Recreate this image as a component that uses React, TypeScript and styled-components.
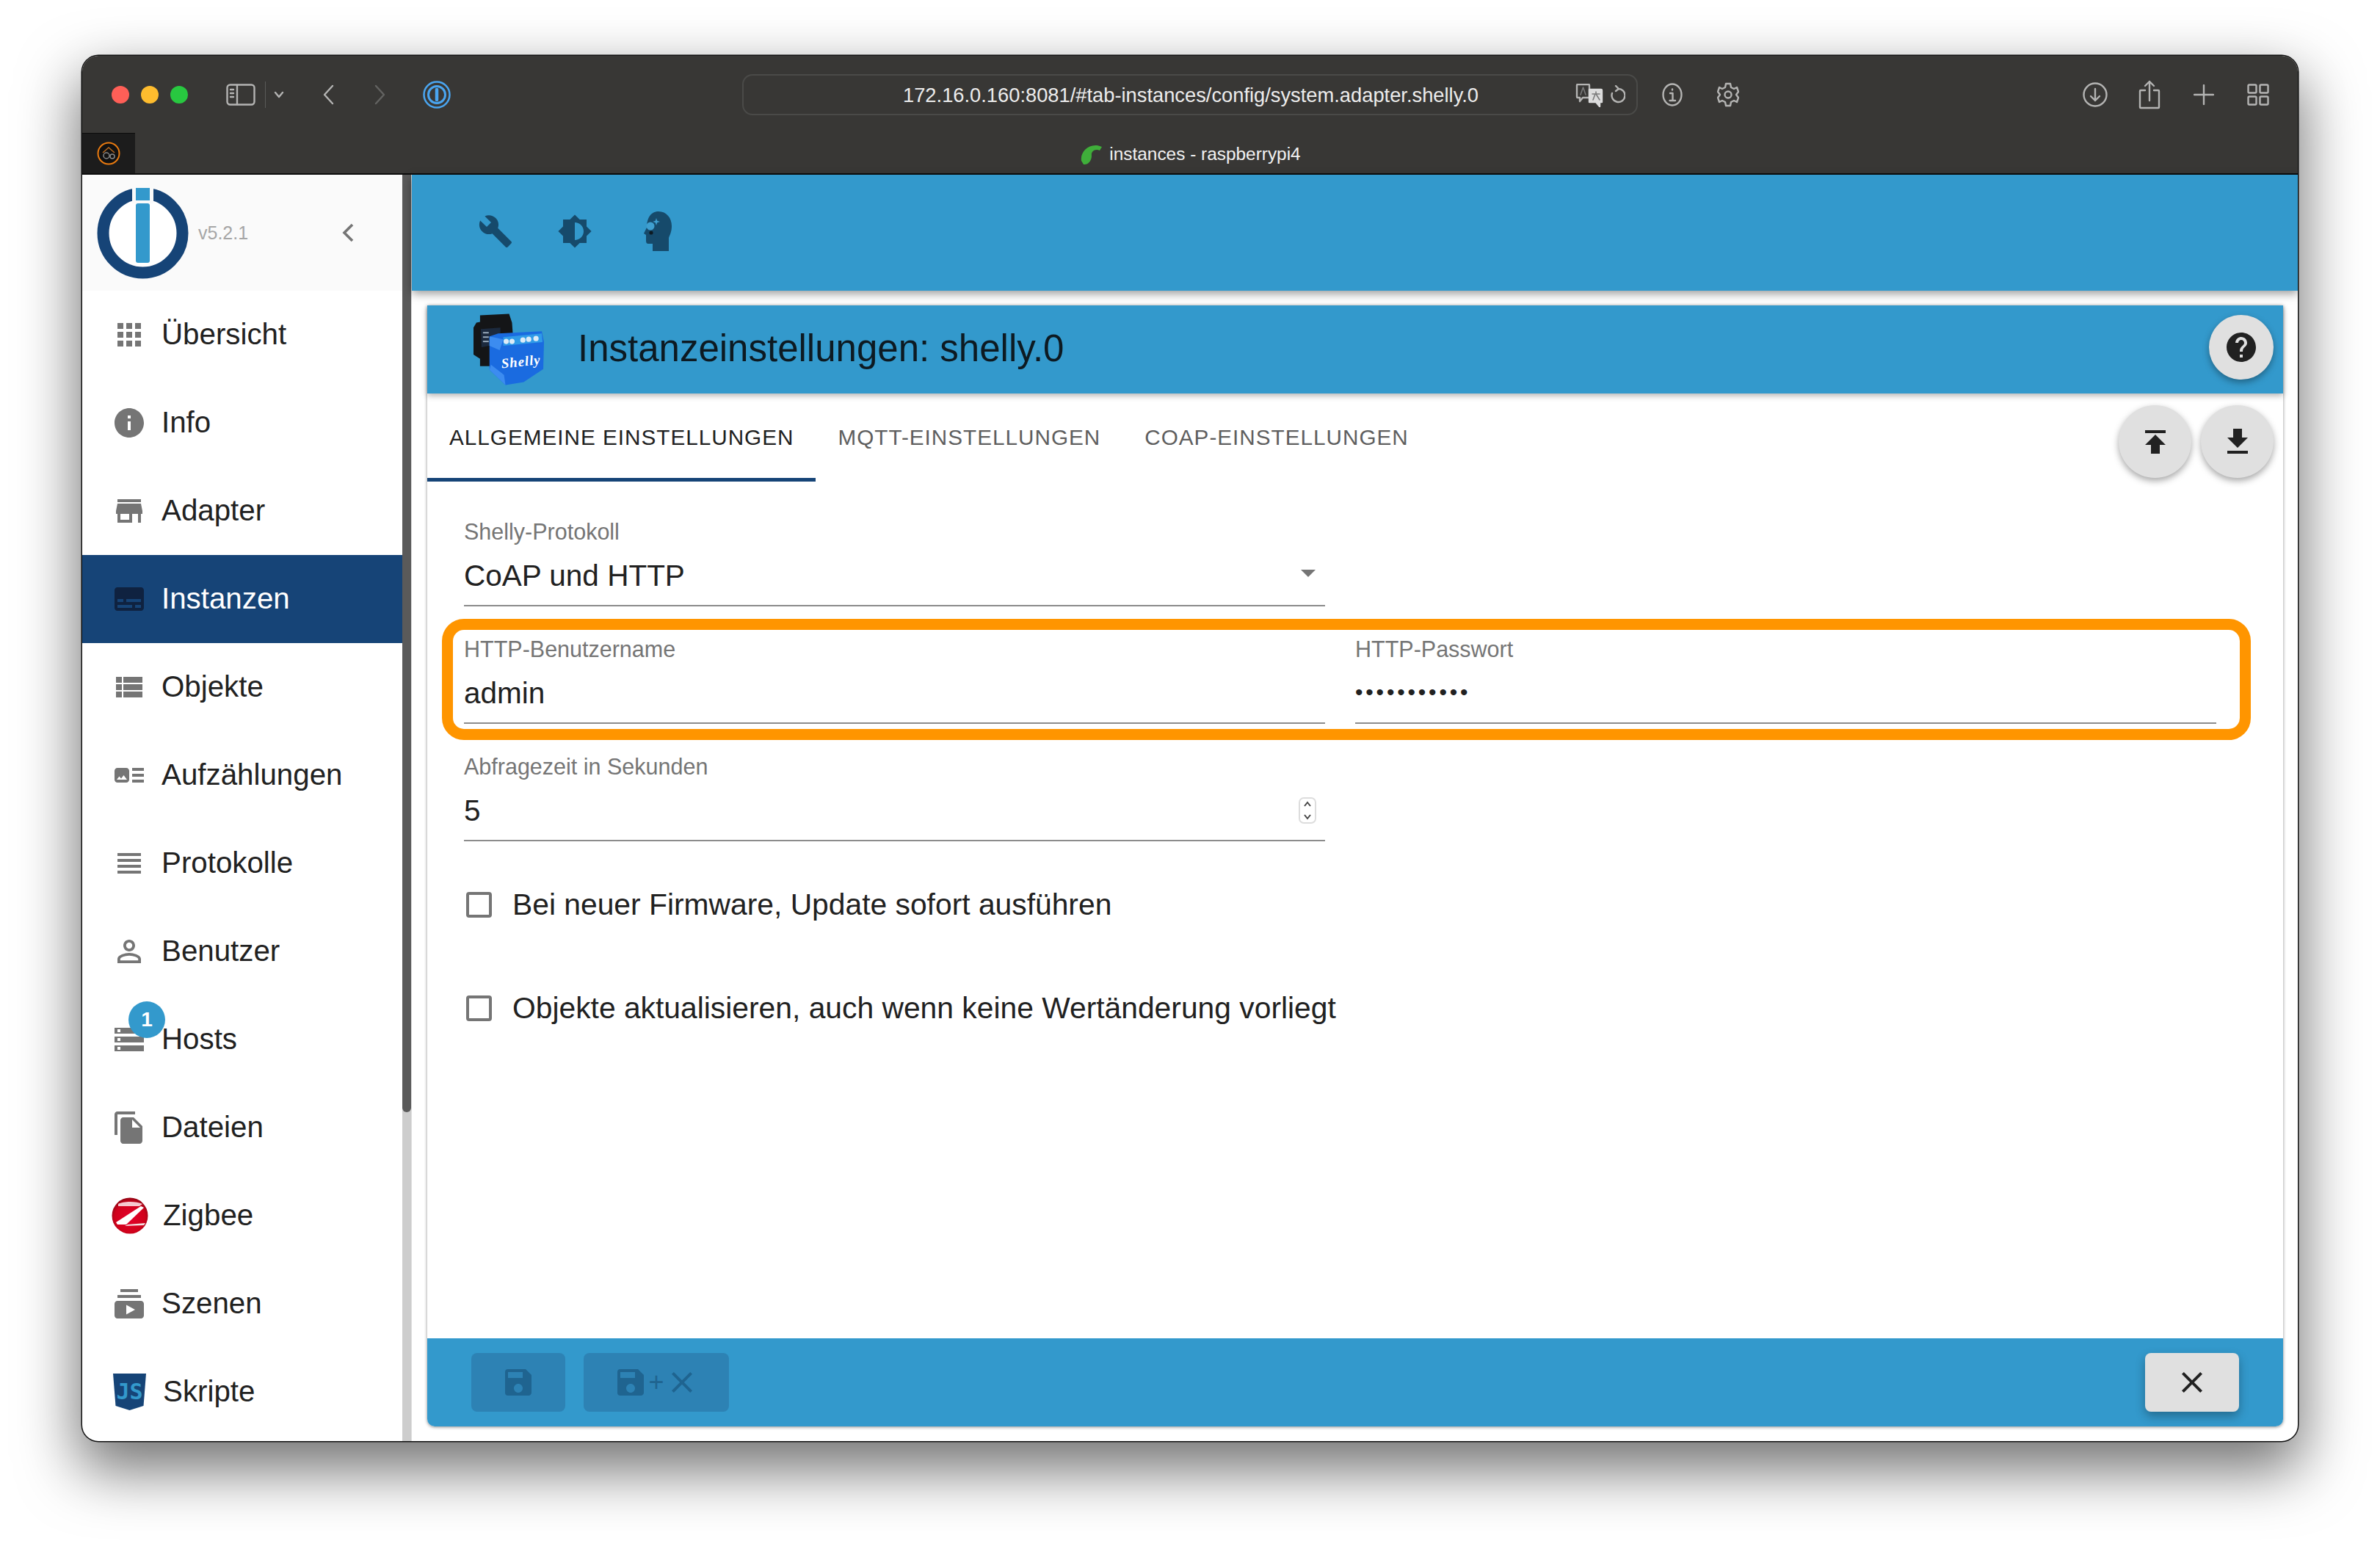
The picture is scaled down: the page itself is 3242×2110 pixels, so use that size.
import * as React from "react";
import styled, { createGlobalStyle } from "styled-components";
import {
  MdApps,
  MdInfo,
  MdStore,
  MdSubtitles,
  MdViewList,
  MdArtTrack,
  MdViewHeadline,
  MdPersonOutline,
  MdStorage,
  MdFileCopy,
  MdSubscriptions,
  MdBuild,
  MdBrightness6,
  MdHelp,
  MdPublish,
  MdGetApp,
  MdArrowDropDown,
  MdSave,
  MdClose,
} from "react-icons/md";

const GlobalStyle = createGlobalStyle`
  html, body {
    margin: 0;
    background: #fff;
    overflow: hidden;
  }
  * {
    box-sizing: border-box;
  }
`;

const Page = styled.div`
  width: 3242px;
  height: 2110px;
  padding: 76px 112px 147px 112px;
  font-family: "Liberation Sans", Arial, sans-serif;
  background: #fff;
`;

const Window = styled.div`
  width: 100%;
  height: 100%;
  display: flex;
  flex-direction: column;
  border-radius: 22px;
  overflow: hidden;
  background: #fff;
  box-shadow: 0 0 0 1.5px #111, 0 34px 80px 6px rgba(0, 0, 0, 0.55);
`;

const TitleBar = styled.div`
  height: 105px;
  flex: none;
  display: flex;
  align-items: center;
  padding-left: 40px;
  background: #383735;
`;

const Light = styled.span<{ $color: string }>`
  width: 24px;
  height: 24px;
  margin-right: 16px;
  border-radius: 50%;
  background: ${(p) => p.$color};
`;

const ToolIcon = styled.svg<{ $ml: number }>`
  flex: none;
  margin-left: ${(p) => p.$ml}px;
  fill: none;
  stroke: #b4b4b3;
  stroke-width: 2.4;
  stroke-linecap: round;
  stroke-linejoin: round;
`;

const Separator = styled.span`
  width: 1px;
  height: 36px;
  margin-left: 13px;
  background: #5a5a58;
`;

const AddressBar = styled.div`
  width: 1220px;
  height: 56px;
  margin-left: 397px;
  display: flex;
  align-items: center;
  padding: 2px 10px 0 217px;
  border: 2px solid #4a4a48;
  border-radius: 14px;
  font-size: 27.3px;
  color: #ececec;
  white-space: nowrap;
`;

const AddressText = styled.span`
  width: 916px;
`;

const TabStrip = styled.div`
  height: 57px;
  flex: none;
  display: grid;
  grid-template-columns: 72px 1fr;
  background: #383735;
  border-bottom: 2px solid #0c0c0c;
`;

const PinnedTab = styled.div`
  display: flex;
  align-items: center;
  justify-content: center;
  background: #1c1c1c;
  border-top: 1px solid #0c0c0c;
`;

const TabTitle = styled.div`
  display: flex;
  align-items: center;
  justify-content: center;
  gap: 9px;
  padding: 2px 72px 0 0;
  font-size: 24.4px;
  color: #f2f2f2;
`;

const Body = styled.div`
  flex: 1;
  min-height: 0;
  display: grid;
  grid-template-columns: 436px 12px 1fr;
`;

const Sidebar = styled.aside`
  display: flex;
  flex-direction: column;
  min-height: 0;
  overflow: hidden;
`;

const SidebarHead = styled.div`
  height: 158px;
  flex: none;
  display: flex;
  align-items: center;
  padding-left: 20px;
  background: #fafafa;
`;

const Version = styled.span`
  margin-left: 13px;
  font-size: 25px;
  color: #a6a6a6;
`;

const Collapse = styled.svg`
  margin-left: auto;
  margin-right: 66px;
  fill: none;
  stroke: #757575;
  stroke-width: 3.6;
`;

const NavItem = styled.div<{ $active?: boolean }>`
  height: 120px;
  flex: none;
  position: relative;
  display: flex;
  align-items: center;
  gap: 20px;
  padding-left: 40px;
  font-size: 40.3px;
  color: ${(p) => (p.$active ? "#fff" : "#212121")};
  background: ${(p) => (p.$active ? "#164477" : "transparent")};

  svg.nav-icon {
    flex: none;
    width: 48px;
    height: 48px;
    color: ${(p) => (p.$active ? "#0f2240" : "#757575")};
  }

  svg.nav-logo {
    flex: none;
    width: 50px;
    height: 50px;
  }
`;

const Badge = styled.span`
  position: absolute;
  left: 63px;
  top: 8px;
  width: 50px;
  height: 50px;
  display: flex;
  align-items: center;
  justify-content: center;
  border-radius: 50%;
  background: #3399cc;
  color: #fff;
  font-size: 28px;
  font-weight: 700;
`;

const ScrollTrack = styled.div`
  background: #cdcdcd;
`;

const ScrollThumb = styled.div`
  height: 1277px;
  border-radius: 0 0 6px 6px;
  background: #5a5a5a;
`;

const Main = styled.main`
  display: flex;
  flex-direction: column;
  min-height: 0;
  border-left: 1px solid #dedede;
`;

const AppBar = styled.div`
  height: 158px;
  flex: none;
  display: flex;
  align-items: center;
  padding: 0 0 4px 90px;
  gap: 60px;
  background: #3399cc;
  color: #164a6b;
  box-shadow: 0 4px 12px rgba(0, 0, 0, 0.4);
  position: relative;
`;

const Card = styled.section`
  flex: 1;
  min-height: 0;
  margin: 20px 20px 20px 21px;
  display: flex;
  flex-direction: column;
  border-radius: 0 0 10px 10px;
  background: #fff;
  box-shadow: 0 1px 4px rgba(0, 0, 0, 0.45);
`;

const CardHead = styled.header`
  height: 120px;
  flex: none;
  display: flex;
  align-items: center;
  padding: 0 13px 0 63px;
  background: #3399cc;
  box-shadow: 0 3px 8px rgba(0, 0, 0, 0.3);
  position: relative;
`;

const CardTitle = styled.h1`
  margin: -4px 0 0 46px;
  font-size: 51px;
  font-weight: 400;
  color: #0d1a22;
`;

const Fab = styled.button<{ $size: number }>`
  flex: none;
  width: ${(p) => p.$size}px;
  height: ${(p) => p.$size}px;
  display: flex;
  align-items: center;
  justify-content: center;
  padding: 0;
  border: 0;
  border-radius: 50%;
  background: #e0e0e0;
  color: #212121;
  box-shadow: 0 4px 10px rgba(0, 0, 0, 0.35);
`;

const HelpFab = styled(Fab)`
  margin: -6px 0 0 auto;
`;

const TabRow = styled.nav`
  height: 120px;
  flex: none;
  display: flex;
  align-items: stretch;
`;

const Tab = styled.div<{ $active?: boolean }>`
  display: flex;
  align-items: center;
  padding: 4px 30px 0;
  font-size: 29.7px;
  letter-spacing: 1px;
  text-transform: uppercase;
  color: ${(p) => (p.$active ? "#212121" : "#5f5f5f")};
  border-bottom: 5px solid ${(p) => (p.$active ? "#164477" : "transparent")};
`;

const TabActions = styled.div`
  margin-left: auto;
  padding: 16px 13px 0 0;
  display: flex;
  gap: 13px;
`;

const Form = styled.div`
  flex: 1;
  padding: 48px 89px 0 50px;
`;

const FieldRow = styled.div`
  display: grid;
  grid-template-columns: 1173px 1173px;
  gap: 41px;
  margin-bottom: 38px;
`;

const Highlight = styled.div`
  margin: -21px -45px 16px -30px;
  padding: 6px 30px 7px 15px;
  border: 15px solid #ff9500;
  border-radius: 30px;

  ${FieldRow} {
    margin-bottom: 0;
  }
`;

const Field = styled.div`
  position: relative;
  display: flex;
  flex-direction: column;
`;

const Label = styled.label`
  height: 40px;
  font-size: 30.5px;
  line-height: 40px;
  color: #757575;
`;

const Value = styled.div`
  height: 82px;
  font-size: 40.5px;
  line-height: 80px;
  color: #212121;
  border-bottom: 2px solid #8c8c8c;
`;

const Dots = styled(Value)`
  font-size: 30px;
  letter-spacing: 3.8px;
  line-height: 78px;
`;

const DropArrow = styled.span`
  position: absolute;
  right: -1px;
  top: 52px;
  color: #757575;
  font-size: 0;
`;

const Stepper = styled.svg`
  position: absolute;
  right: 12px;
  top: 62px;
  fill: none;
  stroke: #444;
  stroke-width: 2;
`;

const CheckRow = styled.div`
  height: 68px;
  display: flex;
  align-items: center;
  gap: 28px;
  margin: 52px 0 0 3px;
  font-size: 40.8px;
  color: #212121;

  & + & {
    margin-top: 73px;
  }
`;

const CheckBox = styled.span`
  width: 35px;
  height: 35px;
  flex: none;
  border: 4px solid #757575;
  border-radius: 4px;
`;

const Footer = styled.footer`
  height: 120px;
  flex: none;
  display: flex;
  align-items: center;
  gap: 25px;
  padding: 0 60px;
  border-radius: 0 0 10px 10px;
  background: #3399cc;
`;

const SaveButton = styled.div<{ $wide?: boolean }>`
  width: ${(p) => (p.$wide ? 198 : 128)}px;
  height: 80px;
  display: flex;
  align-items: center;
  justify-content: center;
  border-radius: 8px;
  background: #2d82b4;
  color: #1f6490;
  font-size: 36px;
`;

const CloseButton = styled.div`
  width: 128px;
  height: 80px;
  margin-left: auto;
  display: flex;
  align-items: center;
  justify-content: center;
  border-radius: 8px;
  background: #e0e0e0;
  color: #212121;
  box-shadow: 0 6px 14px rgba(0, 0, 0, 0.3);
`;

function Logo() {
  return (
    <svg width="125" height="125" viewBox="0 0 125 125">
      <circle cx="62.5" cy="62.5" r="54" fill="#fff" stroke="#164477" strokeWidth="16" />
      <rect x="48" y="0" width="29" height="22" fill="#fafafa" />
      <rect x="53" y="1" width="19" height="17" fill="#3399cc" />
      <rect x="53" y="22" width="19" height="81" rx="3" fill="#3399cc" />
    </svg>
  );
}

function ZigbeeIcon() {
  return (
    <svg className="nav-logo" viewBox="0 0 50 50">
      <defs>
        <radialGradient id="zb" cx="50%" cy="55%" r="60%">
          <stop offset="0%" stopColor="#e4002b" />
          <stop offset="70%" stopColor="#d0021b" />
          <stop offset="100%" stopColor="#7a0612" />
        </radialGradient>
      </defs>
      <circle cx="25" cy="25" r="24.5" fill="url(#zb)" />
      <path d="M9 9 C16 5 34 5 42 9 L38 12 L9 12 Z" fill="#f6c9cf" />
      <path d="M40 12 L44 14 L20 37 L8 37 L6 34 Z" fill="#fff" />
      <path d="M22 37 L46 35 L44 38 L18 39 Z" fill="#f3dfe1" />
    </svg>
  );
}

function JsIcon() {
  return (
    <svg className="nav-logo" viewBox="0 0 50 50">
      <path d="M2 0 H47 L43.5 44 L24.5 50 L5.5 44 Z" fill="#164477" />
      <text x="24.5" y="35" textAnchor="middle" fontFamily="'DejaVu Sans Mono', monospace" fontWeight="700" fontSize="30" fill="#3399cc">
        JS
      </text>
    </svg>
  );
}

function HeadIcon() {
  return (
    <svg width="38" height="54" viewBox="0 0 38 54" style={{ marginLeft: 10 }}>
      <path
        d="M20 0 C31 0 38 9 38 20 C38 28 35 33 34 36 V54 H12 V44 H6 C3 44 3 41 3 38 V32 L0 30 L4 22 C4 10 9 0 20 0 Z"
        fill="#164a6b"
      />
      <circle cx="9" cy="20" r="5.5" fill="#3f9fd0" />
      <path d="M17 9 L18.2 12.8 L22 14 L18.2 15.2 L17 19 L15.8 15.2 L12 14 L15.8 12.8 Z" fill="#3f9fd0" />
      <circle cx="10" cy="29" r="2.6" fill="#0d1a22" />
    </svg>
  );
}

function ShellyIcon() {
  return (
    <svg width="96" height="98" viewBox="0 0 97 98">
      <path d="M9 2 L49 0 L53 12 L56 54 L26 72 L9 72 V62 L0 56 V19 L4 12 L9 11 Z" fill="#141517" />
      <path d="M10 21 L37 19 V41 L11 46 Z" fill="#1c2a3e" />
      <rect x="13" y="25" width="8" height="2" fill="#9ab" />
      <rect x="13" y="31" width="8" height="2" fill="#9ab" />
      <rect x="13" y="37" width="8" height="2" fill="#9ab" />
      <path d="M22 31 L34 27 L94 24 L97 39 L96 76 L69 94 L44 98 L22 77 Z" fill="#1a6be0" />
      <path d="M22 31 L41 35 L36 50 L22 44 Z" fill="#3c8cf0" />
      <path d="M22 77 L44 98 L42 84 L24 70 Z" fill="#3c8cf0" />
      <path d="M41 32 L94 27 L95 39 L41 44 Z" fill="#2f9be8" />
      <circle cx="45" cy="38" r="3.6" fill="#dcebf7" />
      <circle cx="53" cy="38" r="3.6" fill="#dcebf7" />
      <circle cx="68" cy="36" r="3.6" fill="#dcebf7" />
      <circle cx="76" cy="35" r="3.6" fill="#dcebf7" />
      <circle cx="86" cy="34" r="3.6" fill="#dcebf7" />
      <text
        x="66"
        y="72"
        textAnchor="middle"
        transform="rotate(-6 66 72)"
        fontFamily="'Liberation Serif', serif"
        fontStyle="italic"
        fontWeight="700"
        fontSize="19"
        letterSpacing="1"
        fill="#fff"
      >
        Shelly
      </text>
    </svg>
  );
}

const navItems: { label: string; icon: React.ReactNode; active?: boolean; badge?: string }[] = [
  { label: "Übersicht", icon: <MdApps className="nav-icon" /> },
  { label: "Info", icon: <MdInfo className="nav-icon" /> },
  { label: "Adapter", icon: <MdStore className="nav-icon" /> },
  { label: "Instanzen", icon: <MdSubtitles className="nav-icon" />, active: true },
  { label: "Objekte", icon: <MdViewList className="nav-icon" /> },
  { label: "Aufzählungen", icon: <MdArtTrack className="nav-icon" /> },
  { label: "Protokolle", icon: <MdViewHeadline className="nav-icon" /> },
  { label: "Benutzer", icon: <MdPersonOutline className="nav-icon" /> },
  { label: "Hosts", icon: <MdStorage className="nav-icon" />, badge: "1" },
  { label: "Dateien", icon: <MdFileCopy className="nav-icon" /> },
  { label: "Zigbee", icon: <ZigbeeIcon /> },
  { label: "Szenen", icon: <MdSubscriptions className="nav-icon" /> },
  { label: "Skripte", icon: <JsIcon /> },
];

export default function App() {
  return (
    <Page>
      <GlobalStyle />
      <Window>
        <TitleBar>
          <Light $color="#ff5f57" />
          <Light $color="#febc2e" />
          <Light $color="#28c840" />
          <ToolIcon $ml={36} width="40" height="30" viewBox="0 0 40 30">
            <rect x="1.5" y="1.5" width="37" height="27" rx="4" />
            <path d="M15 2 V28 M6 8 H10 M6 13 H10 M6 18 H10" />
          </ToolIcon>
          <Separator />
          <ToolIcon $ml={11} width="14" height="10" viewBox="0 0 14 10">
            <path d="M2 2 L7 8 L12 2" />
          </ToolIcon>
          <ToolIcon $ml={52} width="16" height="28" viewBox="0 0 16 28">
            <path d="M14 2 L3 14 L14 26" />
          </ToolIcon>
          <ToolIcon $ml={55} width="16" height="28" viewBox="0 0 16 28" style={{ stroke: "#636361" }}>
            <path d="M2 2 L13 14 L2 26" />
          </ToolIcon>
          <ToolIcon $ml={50} width="38" height="38" viewBox="0 0 38 38" style={{ stroke: "#4aa5f0" }}>
            <circle cx="19" cy="19" r="17.5" strokeWidth="2.5" />
            <circle cx="19" cy="19" r="11.5" strokeWidth="3" />
            <path d="M19 12 V26" strokeWidth="4.5" />
          </ToolIcon>
          <AddressBar>
            <AddressText>172.16.0.160:8081/#tab-instances/config/system.adapter.shelly.0</AddressText>
            <ToolIcon $ml={0} width="38" height="32" viewBox="0 0 38 32" strokeWidth="1.8">
              <path d="M2 2 Q2 1 3 1 H18 Q19 1 19 2 V19 H10 L6 24 V19 H3 Q2 19 2 18 Z" />
              <path d="M19 8 H35 Q36 8 36 9 V25 H33 V31 L28 25 H19 Z" fill="#dcdcdc" stroke="#dcdcdc" />
              <path d="M7 15 L10.5 5 L14 15 M23 14 H33 M28 11 V14 M27 14 L24 22 M28 14 L33 22" strokeWidth="1.6" style={{ stroke: "#7a7a7a" }} />
            </ToolIcon>
            <ToolIcon $ml={8} width="22" height="28" viewBox="0 0 22 28" strokeWidth="2">
              <path d="M12 5 A9 9 0 1 1 4 11 M9 1 L13 5 L9 8" />
            </ToolIcon>
          </AddressBar>
          <ToolIcon $ml={33} width="28" height="32" viewBox="0 0 28 32">
            <ellipse cx="14" cy="16" rx="12.5" ry="14.5" />
            <path d="M11 14 H14.5 V24 M10.5 24 H18 M14 8.5 V9.5" />
          </ToolIcon>
          <ToolIcon $ml={47} width="30" height="34" viewBox="0 0 30 34">
            <path d="M12 2 H18 L19 7 L23 9 L27 7 L29 13 L26 17 L29 21 L27 27 L23 25 L19 27 L18 32 H12 L11 27 L7 25 L3 27 L1 21 L4 17 L1 13 L3 7 L7 9 L11 7 Z" />
            <circle cx="15" cy="17" r="4.5" />
          </ToolIcon>
          <ToolIcon $ml={468} width="34" height="34" viewBox="0 0 34 34">
            <circle cx="17" cy="17" r="15.5" />
            <path d="M17 9 V25 M11 19 L17 25 L23 19" />
          </ToolIcon>
          <ToolIcon $ml={42} width="30" height="40" viewBox="0 0 30 40">
            <path d="M9 14 H3 Q2 14 2 15 V37 Q2 38 3 38 H27 Q28 38 28 37 V15 Q28 14 27 14 H21 M15 28 V2 M9 8 L15 2 L21 8" />
          </ToolIcon>
          <ToolIcon $ml={45} width="28" height="28" viewBox="0 0 28 28">
            <path d="M14 1 V27 M1 14 H27" />
          </ToolIcon>
          <ToolIcon $ml={45} width="30" height="30" viewBox="0 0 30 30">
            <rect x="1.5" y="1.5" width="11" height="11" rx="1.5" />
            <rect x="17.5" y="1.5" width="11" height="11" rx="1.5" />
            <rect x="1.5" y="17.5" width="11" height="11" rx="1.5" />
            <rect x="17.5" y="17.5" width="11" height="11" rx="1.5" />
          </ToolIcon>
        </TitleBar>
        <TabStrip>
          <PinnedTab>
            <svg width="32" height="32" viewBox="0 0 32 32">
              <circle cx="16" cy="16" r="14.5" fill="#111" stroke="#e87a10" strokeWidth="2" />
              <path d="M8 15 L16 8 L24 15" fill="none" stroke="#b86a20" strokeWidth="1.5" />
              <circle cx="13" cy="19" r="4" fill="none" stroke="#888" strokeWidth="1.5" />
              <circle cx="21" cy="20" r="3" fill="none" stroke="#888" strokeWidth="1.5" />
            </svg>
          </PinnedTab>
          <TabTitle>
            <svg width="32" height="30" viewBox="0 0 32 30">
              <path d="M3 24 C1 10 16 -2 31 5 L28 10 C22 7 16 11 17 17 C17 24 12 30 6 29 Z" fill="#3fae3a" />
            </svg>
            instances - raspberrypi4
          </TabTitle>
        </TabStrip>
        <Body>
          <Sidebar>
            <SidebarHead>
              <Logo />
              <Version>v5.2.1</Version>
              <Collapse width="16" height="26" viewBox="0 0 16 26">
                <path d="M14 2 L3 13 L14 24" />
              </Collapse>
            </SidebarHead>
            {navItems.map((item) => (
              <NavItem key={item.label} $active={item.active}>
                {item.icon}
                {item.label}
                {item.badge && <Badge>{item.badge}</Badge>}
              </NavItem>
            ))}
          </Sidebar>
          <ScrollTrack>
            <ScrollThumb />
          </ScrollTrack>
          <Main>
            <AppBar>
              <MdBuild size={48} />
              <MdBrightness6 size={48} />
              <HeadIcon />
            </AppBar>
            <Card>
              <CardHead>
                <ShellyIcon />
                <CardTitle>Instanzeinstellungen: shelly.0</CardTitle>
                <HelpFab $size={88}>
                  <MdHelp size={48} />
                </HelpFab>
              </CardHead>
              <TabRow>
                <Tab $active>Allgemeine Einstellungen</Tab>
                <Tab>MQTT-Einstellungen</Tab>
                <Tab>CoAP-Einstellungen</Tab>
                <TabActions>
                  <Fab $size={99}>
                    <MdPublish size={48} />
                  </Fab>
                  <Fab $size={99}>
                    <MdGetApp size={48} />
                  </Fab>
                </TabActions>
              </TabRow>
              <Form>
                <FieldRow>
                  <Field>
                    <Label>Shelly-Protokoll</Label>
                    <Value>CoAP und HTTP</Value>
                    <DropArrow>
                      <MdArrowDropDown size={48} />
                    </DropArrow>
                  </Field>
                </FieldRow>
                <Highlight>
                  <FieldRow>
                    <Field>
                      <Label>HTTP-Benutzername</Label>
                      <Value>admin</Value>
                    </Field>
                    <Field>
                      <Label>HTTP-Passwort</Label>
                      <Dots>•••••••••••</Dots>
                    </Field>
                  </FieldRow>
                </Highlight>
                <FieldRow>
                  <Field>
                    <Label>Abfragezeit in Sekunden</Label>
                    <Value>5</Value>
                    <Stepper width="24" height="36" viewBox="0 0 24 36">
                      <rect x="1" y="1" width="22" height="34" rx="6" stroke="#ddd" />
                      <path d="M8 12 L12 7 L16 12 M8 24 L12 29 L16 24" />
                    </Stepper>
                  </Field>
                </FieldRow>
                <CheckRow>
                  <CheckBox />
                  Bei neuer Firmware, Update sofort ausführen
                </CheckRow>
                <CheckRow>
                  <CheckBox />
                  Objekte aktualisieren, auch wenn keine Wertänderung vorliegt
                </CheckRow>
              </Form>
              <Footer>
                <SaveButton>
                  <MdSave size={48} />
                </SaveButton>
                <SaveButton $wide>
                  <MdSave size={48} />+
                  <MdClose size={48} />
                </SaveButton>
                <CloseButton>
                  <MdClose size={48} />
                </CloseButton>
              </Footer>
            </Card>
          </Main>
        </Body>
      </Window>
    </Page>
  );
}
